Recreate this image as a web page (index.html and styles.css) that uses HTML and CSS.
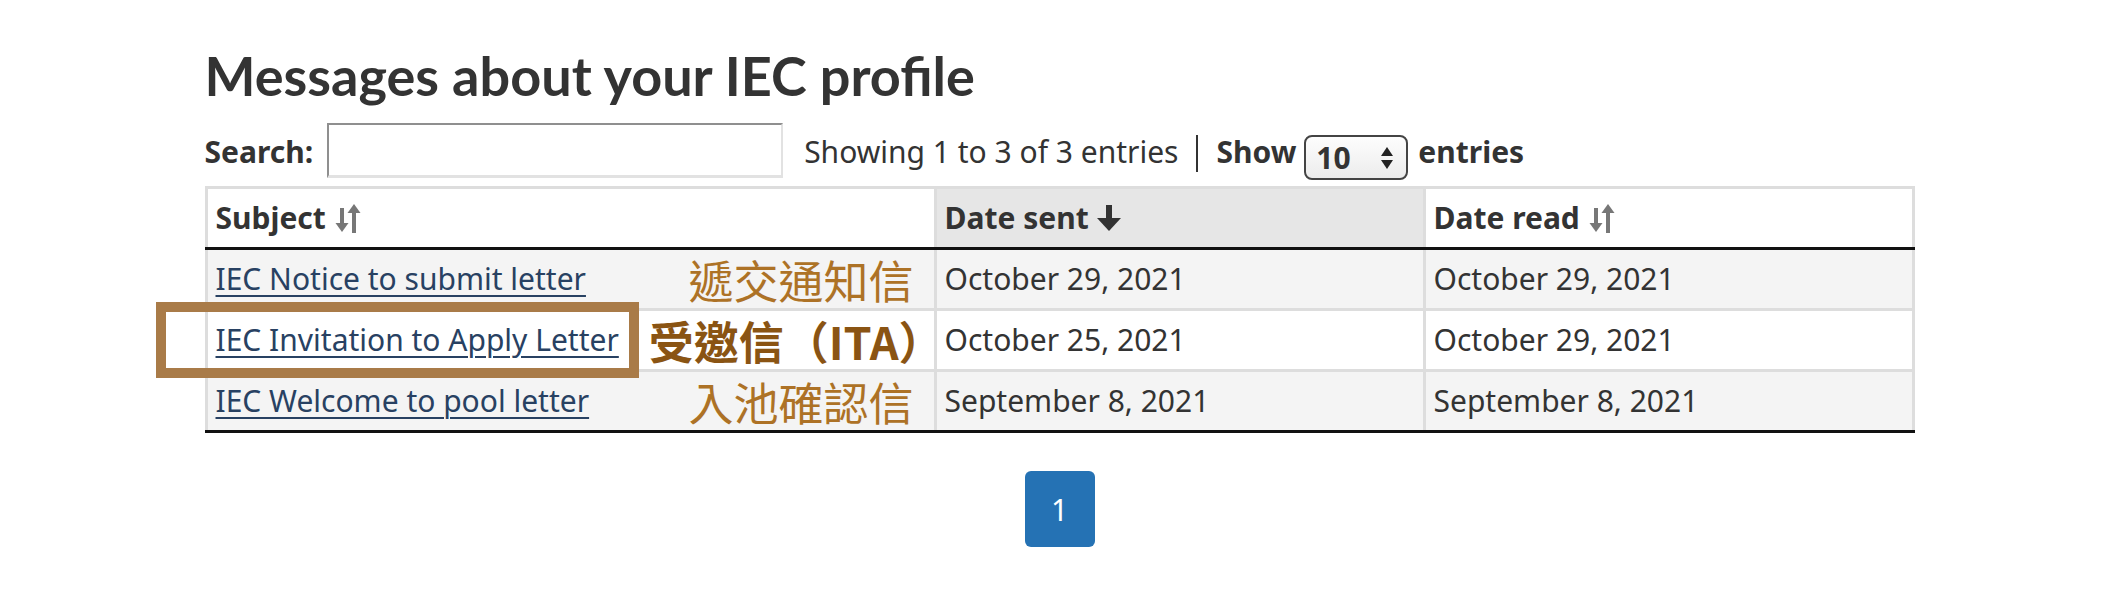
FILE: index.html
```html
<!DOCTYPE html>
<html lang="en">
<head>
    <meta charset="UTF-8">
    <title>Messages about your IEC profile</title>
    <link rel="stylesheet" href="styles.css">
</head>
<body>
    <main class="page">
        <h1>Messages about your IEC profile</h1>

        <!-- Barra de busca e contagem -->
        <div class="toolbar">
            <label class="label" for="search">Search:</label>
            <input type="text" id="search" class="search">
            <span class="info">Showing 1 to 3 of 3 entries</span>
            <span class="sep"></span>
            <span class="label">Show</span>
            <span class="select">
                <span>10</span>
                <svg width="14" height="26" viewBox="0 0 14 26">
                    <polygon points="7,2 13,11 1,11" fill="#222"/>
                    <polygon points="1,15 13,15 7,24" fill="#222"/>
                </svg>
            </span>
            <span class="label">entries</span>
        </div>

        <div class="table-wrap">
            <table class="messages">
                <colgroup>
                    <col class="c1">
                    <col class="c2">
                    <col class="c3">
                </colgroup>
                <thead>
                    <tr>
                        <th>
                            <span class="th-in">Subject
                                <svg class="sort" width="28" height="30" viewBox="0 0 28 30">
                                    <rect x="6" y="5" width="4" height="17" fill="#777"/>
                                    <polygon points="1.5,20 14.5,20 8,29" fill="#777"/>
                                    <rect x="18" y="9" width="4" height="21" fill="#777"/>
                                    <polygon points="13.5,10 26.5,10 20,1" fill="#777"/>
                                </svg>
                            </span>
                        </th>
                        <th class="sorted">
                            <span class="th-in">Date sent
                                <svg class="sort" width="24" height="28" viewBox="0 0 24 28">
                                    <rect x="9" y="1" width="6" height="15" fill="#333"/>
                                    <polygon points="0,14 24,14 12,27" fill="#333"/>
                                </svg>
                            </span>
                        </th>
                        <th>
                            <span class="th-in">Date read
                                <svg class="sort" width="28" height="30" viewBox="0 0 28 30">
                                    <rect x="6" y="5" width="4" height="17" fill="#777"/>
                                    <polygon points="1.5,20 14.5,20 8,29" fill="#777"/>
                                    <rect x="18" y="9" width="4" height="21" fill="#777"/>
                                    <polygon points="13.5,10 26.5,10 20,1" fill="#777"/>
                                </svg>
                            </span>
                        </th>
                    </tr>
                </thead>
                <tbody>
                    <tr>
                        <td>
                            <div class="subject">
                                <a href="#">IEC Notice to submit letter</a>
                                <span class="note">遞交通知信</span>
                            </div>
                        </td>
                        <td>October 29, 2021</td>
                        <td>October 29, 2021</td>
                    </tr>
                    <tr>
                        <td>
                            <div class="subject">
                                <a href="#">IEC Invitation to Apply Letter</a>
                                <span class="note strong">受邀信（ITA）</span>
                            </div>
                        </td>
                        <td>October 25, 2021</td>
                        <td>October 29, 2021</td>
                    </tr>
                    <tr>
                        <td>
                            <div class="subject">
                                <a href="#">IEC Welcome to pool letter</a>
                                <span class="note">入池確認信</span>
                            </div>
                        </td>
                        <td>September 8, 2021</td>
                        <td>September 8, 2021</td>
                    </tr>
                </tbody>
            </table>
            <!-- destaque em volta da carta ITA -->
            <div class="highlight"></div>
        </div>

        <div class="pager">
            <a href="#" class="page-btn">1</a>
        </div>
    </main>
</body>
</html>
```

FILE: styles.css
```css
/* Estilo Geral */
body {
    margin: 0;
    background-color: #fff;
    color: #333;
    font-family: "Noto Sans", sans-serif;
    font-size: 30px;
}

.page {
    width: 1710px;
    margin: 0 auto;
}

/* Título */
h1 {
    margin: 43px 0 0;
    font-family: Lato, sans-serif;
    font-weight: 700;
    font-size: 54px;
    line-height: 66px;
    color: #333;
}

/* Busca e contagem */
.toolbar {
    display: flex;
    align-items: center;
    height: 55px;
    margin-top: 13px;
    padding-top: 2px;
}

.label {
    font-weight: 700;
}

.search {
    width: 456px;
    height: 55px;
    box-sizing: border-box;
    margin: -2px 21px 0 14px;
    border-style: solid;
    border-width: 2px 2px 3px 2px;
    border-color: #8f8f8f #e2e2e2 #e2e2e2 #8f8f8f;
    font-size: 26px;
}

.info {
    color: #333;
}

.sep {
    width: 2px;
    height: 37px;
    background-color: #333;
    margin: 4px 18px 0 18px;
}

.select {
    align-self: flex-end;
    margin: 0 10px -1px 8px;
    width: 104px;
    height: 45px;
    box-sizing: border-box;
    border: 2px solid #444;
    border-radius: 8px;
    background: linear-gradient(#fdfdfd, #ececec);
    display: flex;
    align-items: center;
    justify-content: space-between;
    padding: 0 12px 0 10px;
    font-weight: 700;
}

/* Tabela */
.table-wrap {
    position: relative;
    margin-top: 7px;
}

.messages {
    width: 1707px;
    table-layout: fixed;
    border-collapse: collapse;
}

.c1 { width: 729px; }
.c2 { width: 489px; }
.c3 { width: 489px; }

.messages th,
.messages td {
    border: 3px solid #ddd;
    padding: 11px 8px;
    height: 36px;
    line-height: 36px;
    text-align: left;
    vertical-align: middle;
}

.messages th {
    border-bottom: 3px solid #111;
    font-weight: 700;
    background-color: #fff;
}

.messages th.sorted {
    background-color: #e6e6e6;
}

.th-in {
    display: inline-flex;
    align-items: center;
    gap: 8px;
}

.messages tbody tr:nth-child(odd) td {
    background-color: #f4f4f4;
}

.messages tbody tr:last-child td {
    border-bottom: 3px solid #111;
}

.subject {
    display: flex;
    align-items: center;
    height: 36px;
}

.subject a {
    color: #284162;
    text-decoration: underline;
    text-decoration-thickness: 2px;
    text-underline-offset: 5px;
}

.note {
    margin-left: auto;
    margin-right: 12px;
    font-family: "Noto Sans CJK TC", sans-serif;
    font-size: 45px;
    line-height: 45px;
    height: 45px;
    color: #ad7226;
}

.note.strong {
    margin-right: -18px;
    font-weight: 700;
    color: #8a5413;
}

.highlight {
    position: absolute;
    left: -49px;
    top: 116px;
    width: 483px;
    height: 76px;
    box-sizing: border-box;
    border: 10px solid #a97b48;
}

/* Paginação */
.pager {
    display: flex;
    justify-content: center;
    margin-top: 38px;
}

.page-btn {
    width: 70px;
    height: 76px;
    border-radius: 6px;
    background-color: #2572b4;
    color: #fff;
    text-decoration: none;
    display: flex;
    align-items: center;
    justify-content: center;
}
```
